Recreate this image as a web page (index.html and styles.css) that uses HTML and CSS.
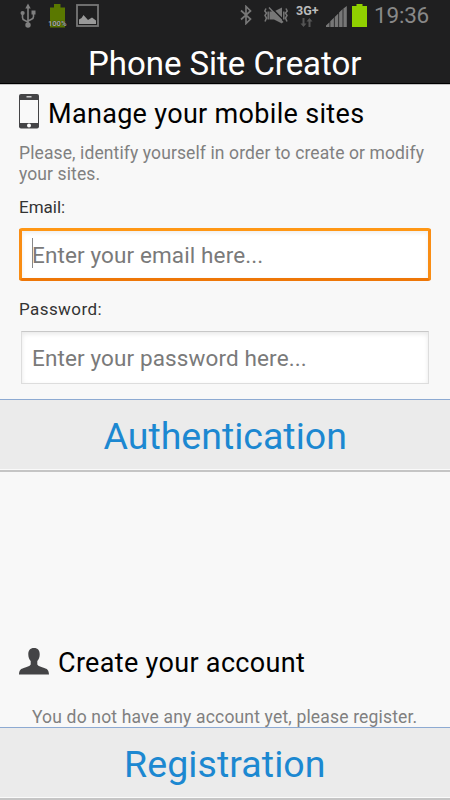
FILE: index.html
```html
<!DOCTYPE html>
<html lang="en">
<head>
<meta charset="utf-8">
<title>Phone Site Creator</title>
<link rel="stylesheet" href="styles.css">
</head>
<body>
<div class="status">
  <svg class="usb" width="16" height="26" viewBox="0 0 16 26" fill="none" stroke="#808080" stroke-width="1.6"><path d="M8 5v18M2.5 11v3.5q0 2 2 2.8L8 19M13.5 10v3.5q0 2-2 2.8L8 18"/><path d="M8 .5L5.3 5.5h5.4z" fill="#808080" stroke="none"/><circle cx="2.6" cy="10" r="2.1" fill="#808080" stroke="none"/><path d="M11.5 7.5h4v4h-4z" fill="#808080" stroke="none"/><circle cx="8" cy="22" r="2.7" fill="#808080" stroke="none"/></svg>
  <div class="charge"><svg width="18" height="26" viewBox="0 0 18 26"><path d="M2 3.500h4V0h6.500v3.500H17V23.500H2z" fill="#5a7800"/></svg><span class="percent">100%</span></div>
  <svg class="photo" width="23" height="23" viewBox="0 0 23 23"><rect x="1" y="1" width="21" height="21" fill="none" stroke="#777" stroke-width="1.8"/><path d="M3 20v-4.500q3-1 4.500-4.500l4.500 5 4-2.500 4 3V20z" fill="#999"/></svg>
  <svg class="bluetooth" width="12" height="20" viewBox="0 0 12 20" fill="none" stroke="#777" stroke-width="1.7"><path d="M1 5.500L10.500 14 6 18.500V1.500L10.500 6 1 14.500"/></svg>
  <svg class="mute" width="24" height="19" viewBox="0 0 24 19"><path d="M5.500 5.500h4.500l8-4v16l-8-4H5.500z" fill="#777"/><path d="M6.500 1L20 14.500" stroke="#1f1f20" stroke-width="1.600"/><path d="M5 1.500L19 16.500M2 2.500L.8 5l1.700 2L1 9.500l1.500 2.500L1 15.500M4.200 5.500v8M22 2.500L23.200 5l-1.700 2L23 9.500 21.500 12l1.500 3.500M19.800 5.500v8" fill="none" stroke="#777" stroke-width="1.500"/></svg>
  <div class="network"><span>3G+</span><svg width="13" height="10" viewBox="0 0 13 10" fill="#555"><path d="M2.500 0h2v5.500h2L3.500 9 .5 5.500h2zM8.500 9h2V3.500h2L9.500 0l-3 3.500h2z"/></svg></div>
  <svg class="signal" width="21" height="21" viewBox="0 0 21 21" fill="#777"><path d="M0 21v-1.500l3.500-3.300V21zM4.300 21v-5.800l3.600-3.400V21zM8.700 21V10.900L12.300 7.500V21zM13.100 21V6.400l3.500-3.300V21zM17.400 21V2.500L20.800 0v21z"/></svg>
  <svg class="battery" width="15" height="23" viewBox="0 0 15 23"><path d="M0 2h4.500V0h6v2H15v21H0z" fill="#90d000"/></svg>
  <span class="clock">19:36</span>
</div>
<header class="title"><h1>Phone Site Creator</h1></header>
<main class="page">
  <section class="login">
    <div class="heading">
      <svg width="20" height="35" viewBox="0 0 20 35"><rect width="20" height="34.500" rx="2" fill="#444446"/><path d="M1 6h18v23H1z" fill="#f9f9f9"/><path d="M7.500 2.800h5" stroke="#eee" stroke-width="1.200"/><circle cx="10" cy="31.600" r="2" fill="#fff"/></svg>
      <h2>Manage your mobile sites</h2>
    </div>
    <p class="intro">Please, identify yourself in order to create or modify<br>your sites.</p>
    <div class="label">Email:</div>
    <div class="field focused"><i class="caret"></i><span>Enter your email here...</span></div>
    <div class="label second">Password:</div>
    <div class="field plain"><span>Enter your password here...</span></div>
  </section>
  <div class="button">Authentication</div>
  <section class="signup">
    <div class="heading account">
      <svg width="30" height="27" viewBox="0 0 30 27"><path d="M15 0c4 0 5.800 2.500 5.700 6.500 0 3-1 5-2.400 6.500v3.500c1 2 4 2.400 7 3.600 3 1.100 4.500 2 4.700 6.400H0c.2-4.400 1.700-5.300 4.700-6.400 3-1.200 6-1.600 7-3.600V13c-1.400-1.500-2.400-3.500-2.400-6.500C9.200 2.500 11 0 15 0z" fill="#444446"/></svg>
      <h2>Create your account</h2>
    </div>
    <p class="note">You do not have any account yet, please register.</p>
  </section>
  <div class="button register">Registration</div>
</main>
</body>
</html>
```
FILE: styles.css
```css
* { box-sizing: border-box; }
body { margin: 0; width: 450px; height: 800px; overflow: hidden; background: #f8f8f8; font-family: Roboto, sans-serif; color: #000; display: flex; flex-direction: column; }
h1, h2, p { margin: 0; font-weight: 400; white-space: nowrap; }
svg { display: block; flex: none; }
span { white-space: nowrap; }
.status { height: 34px; flex: none; background: #1f1f20; display: flex; align-items: flex-start; }
.usb { margin: 3px 0 0 20px; }
.charge { position: relative; margin: 4px 0 0 12px; width: 19px; }
.percent { position: absolute; left: 0; top: 15px; font-size: 7.500px; line-height: 9px; font-weight: 700; color: #aaa; text-shadow: 0 0 1px #000; }
.photo { margin: 4px 0 0 9px; }
.bluetooth { margin: 5px 0 0 141px; }
.mute { margin: 6px 0 0 12px; }
.network { margin: 4px 0 0 8px; width: 24px; font-size: 12.500px; line-height: 14px; font-weight: 700; color: #bbb; }
.network svg { margin: 0 0 0 4px; }
.signal { margin: 6px 0 0 6px; }
.battery { margin: 4px 0 0 5px; }
.clock { margin: 1px 0 0 7px; font-size: 22.500px; line-height: 28px; letter-spacing: -0.2px; color: #888; }
.title { height: 50px; flex: none; background: #1f1f20; border-bottom: 1px solid #000; padding-left: 88px; }
.title h1 { color: #fff; font-size: 33px; line-height: 60px; letter-spacing: -0.04px; }
.page { flex: 1; border-top: 1px solid #c5c5c5; display: flex; flex-direction: column; }
.login { height: 314px; flex: none; padding: 9px 19px 0; }
.heading { display: flex; height: 42px; }
.heading h2 { font-size: 27px; line-height: 42px; margin: -1px 0 0 9px; letter-spacing: 0.32px; }
.intro { margin-top: 7px; font-size: 17.500px; line-height: 21px; letter-spacing: 0.11px; color: #808080; }
.label { margin-top: 11px; font-size: 17px; line-height: 22px; color: #333; }
.second { margin-top: 17px; letter-spacing: 0.42px; }
.field { display: flex; align-items: center; height: 53px; font-size: 22.500px; letter-spacing: 0.12px; color: #7a7a7a; padding-left: 10px; background: #fff; }
.focused { position: relative; margin-top: 10px; border: 3px solid; border-color: #ff9715 #f98d14 #ee7708; border-radius: 3px; box-shadow: inset 0 2px 4px #eee; }
.caret { position: absolute; left: 10px; top: 7px; width: 1px; height: 30px; background: #888; }
.plain { margin: 11px 2px 0; border: 1px solid #ddd; border-top-color: #c8c8c8; box-shadow: inset 0 2px 5px #e8e8e8; }
.button { height: 73px; flex: none; background: #ebebeb; border-top: 1px solid #8daad2; border-bottom: 2px solid #c5c5c5; font-size: 37.500px; line-height: 73px; color: #1c88d1; padding-left: 103.500px; box-shadow: inset 0 -1px #fafafa; }
.signup { height: 255px; flex: none; padding: 176px 19px 0; }
.account h2 { margin-top: -6px; }
.note { margin-left: 13px; margin-top: 17px; font-size: 17.500px; line-height: 21px; letter-spacing: 0.17px; color: #808080; }
.register { padding-left: 124px; letter-spacing: 0.08px; }
```
